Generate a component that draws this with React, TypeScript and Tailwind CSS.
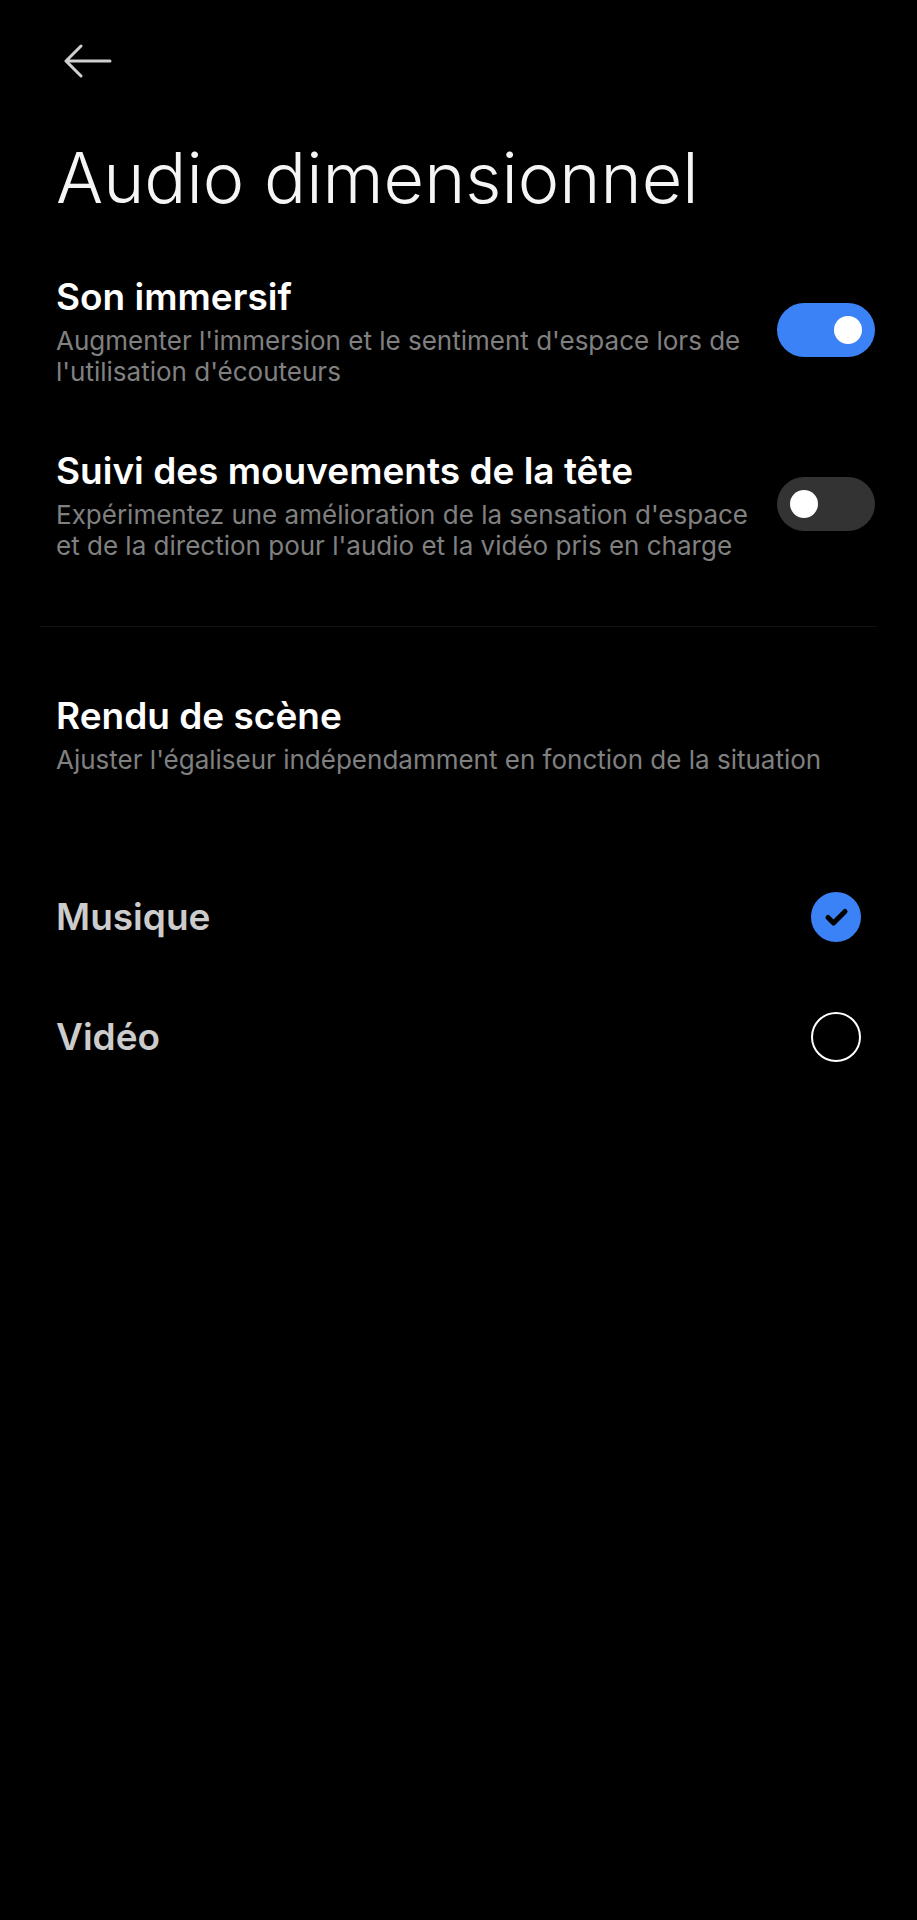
import { useState } from "react"

interface SwitchRowProps {
  id: string
  title: string
  description: string
  defaultChecked?: boolean
}

function SwitchRow({ id, title, description, defaultChecked }: SwitchRowProps) {
  return (
    <div className="flex min-h-[174px] items-center justify-between gap-4 pl-14 pr-[42px]">
      <label htmlFor={id} className="min-w-0 flex-1">
        <span className="block text-[37px] leading-[48px] font-semibold text-white">{title}</span>
        <span className="mt-1 block text-[26px] leading-[31px] text-[#808080]">{description}</span>
      </label>
      <input
        id={id}
        type="checkbox"
        role="switch"
        defaultChecked={defaultChecked}
        className="flex h-[54px] w-[98px] shrink-0 cursor-pointer appearance-none items-center rounded-full bg-[#333333] px-[13px] before:size-7 before:rounded-full before:bg-white before:content-[''] checked:justify-end checked:bg-[#3b82f7]"
      />
    </div>
  )
}

const scenes = [
  { id: "music", label: "Musique" },
  { id: "video", label: "Vidéo" },
]

export default function App() {
  const [scene, setScene] = useState("music")

  return (
    <main className="min-h-screen bg-black font-[Inter,sans-serif]">
      <header className="pt-8">
        <button type="button" aria-label="Retour" className="ml-14 block px-2 py-3 text-[#d0d0d0]">
          <svg viewBox="0 0 48 34" className="h-[34px] w-12" fill="none" stroke="currentColor" strokeWidth="3" strokeLinecap="round" strokeLinejoin="round">
            <path d="M46 17H2M17 2L2 17L17 32" />
          </svg>
        </button>
        <h1 className="mt-10 px-14 text-[70px] leading-[96px] font-light text-[#f5f5f5]">Audio dimensionnel</h1>
      </header>

      <section className="mt-[17px]">
        <SwitchRow
          id="immersive"
          title="Son immersif"
          description="Augmenter l'immersion et le sentiment d'espace lors de l'utilisation d'écouteurs"
          defaultChecked
        />
        <SwitchRow
          id="head-tracking"
          title="Suivi des mouvements de la tête"
          description="Expérimentez une amélioration de la sensation d'espace et de la direction pour l'audio et la vidéo pris en charge"
        />
      </section>

      <hr className="mx-10 mt-[35px] border-[#121212]" />

      <section className="mt-[65px]">
        <div className="px-14">
          <h2 className="text-[37px] leading-[48px] font-semibold text-white">Rendu de scène</h2>
          <p className="mt-1 text-[26px] leading-[31px] text-[#808080]">Ajuster l'égaliseur indépendamment en fonction de la situation</p>
        </div>
        <div role="radiogroup" aria-label="Rendu de scène" className="mt-[82px]">
          {scenes.map(({ id, label }) => (
            <label key={id} className="flex h-[120px] cursor-pointer items-center justify-between px-14">
              <span className="text-[37px] leading-[48px] font-semibold text-[#cccccc]">{label}</span>
              <span className="grid size-[50px] shrink-0">
                <input
                  type="radio"
                  name="scene"
                  value={id}
                  checked={scene === id}
                  onChange={() => setScene(id)}
                  className="peer col-start-1 row-start-1 size-[50px] appearance-none rounded-full border-2 border-white checked:border-[#3b82f7] checked:bg-[#3b82f7]"
                />
                <svg viewBox="0 0 50 50" className="pointer-events-none col-start-1 row-start-1 hidden size-[50px] peer-checked:block" fill="none" stroke="#000" strokeWidth="5" strokeLinecap="round" strokeLinejoin="round">
                  <path d="M17 25.5L22.5 31L34 19.5" />
                </svg>
              </span>
            </label>
          ))}
        </div>
      </section>
    </main>
  )
}
